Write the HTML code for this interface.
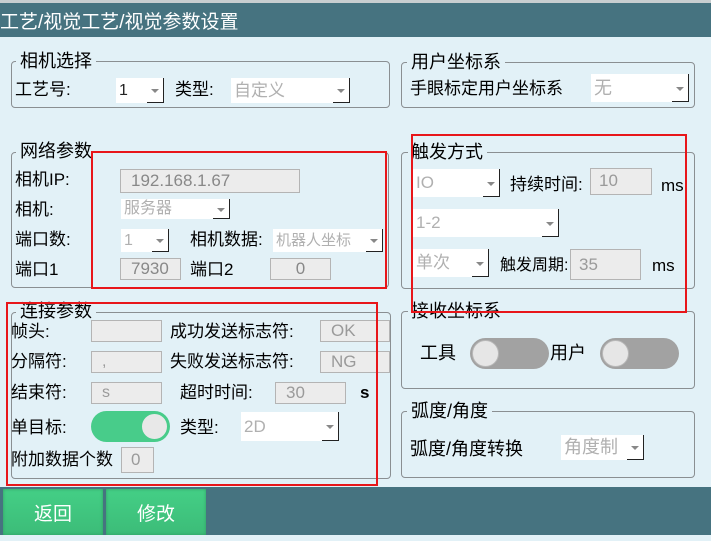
<!DOCTYPE html>
<html><head><meta charset="utf-8"><style>
*{margin:0;padding:0;box-sizing:border-box}
body{width:711px;height:535px;overflow:hidden;background:#e2f1f7;font-family:"Liberation Sans","Noto Sans CJK SC",sans-serif;color:#000;position:relative}
.a{position:absolute;white-space:nowrap}
.hdr{left:0;top:0;width:711px;height:37px;background:#467380;border-top:3px solid #c8ced0}
.ht{left:0;top:7px;color:#fff;font-size:19px}
.g{position:absolute;border:1px solid #8a8f92;border-radius:4px}
.gt{position:absolute;font-size:18px;background:#e2f1f7;padding:0 4px;line-height:20px}
.l{position:absolute;font-size:17px;line-height:20px;white-space:nowrap}
.in{position:absolute;background:#ececec;border:1px solid #b4b4b4;color:#9a9a9a;font-size:16px;line-height:20px;padding-left:10px;overflow:hidden}
.cb{position:absolute;background:#fff;color:#b0b0b0;font-size:16px;padding-left:3px;overflow:hidden}
.cb .ar{position:absolute;right:0;top:0;bottom:0;width:17px;border-right:1px solid #222;border-bottom:1px solid #222;background:#fff}
.cb .ar:after{content:"";position:absolute;left:4px;top:50%;margin-top:-1px;border-left:4px solid transparent;border-right:4px solid transparent;border-top:4px solid #888}
.red{position:absolute;border:2px solid #e8161a}
.tg{position:absolute;border-radius:16px;background:#a2a2a2}
.tg .k{position:absolute;top:2px;width:27px;height:27px;border-radius:50%;background:#e6e6e6;border:1px solid #b8b8b8}
.bar{left:0;top:487px;width:711px;height:48px;background:#467380}
.btn{position:absolute;top:489px;height:46px;background:linear-gradient(#44cf86,#3cbc78);color:#fff;font-size:19px;text-align:center;line-height:52px;box-shadow:inset 0 0 3px #2f9c62}
</style></head><body>
<div class="a hdr"></div>
<div class="a ht">工艺/视觉工艺/视觉参数设置</div>

<div class="g" style="left:11px;top:61px;width:379px;height:47px"></div>
<div class="gt" style="left:16px;top:51px">相机选择</div>
<div class="l" style="left:15px;top:80px">工艺号:</div>
<div class="cb" style="left:116px;top:78px;width:48px;height:25px;line-height:25px;color:#222">1<div class="ar"></div></div>
<div class="l" style="left:175px;top:80px">类型:</div>
<div class="cb" style="left:231px;top:78px;width:119px;height:25px;line-height:25px;font-size:17px">自定义<div class="ar"></div></div>

<div class="g" style="left:11px;top:152px;width:378px;height:136px"></div>
<div class="gt" style="left:16px;top:141px">网络参数</div>
<div class="l" style="left:15px;top:170px">相机IP:</div>
<div class="in" style="left:120px;top:169px;width:180px;height:24px;line-height:22px;font-size:17px;color:#888">192.168.1.67</div>
<div class="l" style="left:15px;top:200px">相机:</div>
<div class="cb" style="left:121px;top:199px;width:109px;height:20px;line-height:19px">服务器<div class="ar"></div></div>
<div class="l" style="left:15px;top:230px">端口数:</div>
<div class="cb" style="left:121px;top:229px;width:48px;height:23px;line-height:23px">1<div class="ar"></div></div>
<div class="l" style="left:190px;top:230px">相机数据:</div>
<div class="cb" style="left:273px;top:229px;width:110px;height:23px;line-height:23px;font-size:15px">机器人坐标<div class="ar"></div></div>
<div class="l" style="left:15px;top:260px">端口1</div>
<div class="in" style="left:120px;top:258px;width:61px;height:22px;font-size:17px;color:#888">7930</div>
<div class="l" style="left:190px;top:260px">端口2</div>
<div class="in" style="left:270px;top:258px;width:61px;height:22px;font-size:17px;color:#888;text-align:center;padding:0">0</div>

<div class="g" style="left:11px;top:312px;width:380px;height:167px"></div>
<div class="gt" style="left:16px;top:301px">连接参数</div>
<div class="l" style="left:11px;top:322px">帧头:</div>
<div class="in" style="left:91px;top:320px;width:71px;height:22px"></div>
<div class="l" style="left:170px;top:322px">成功发送标志符:</div>
<div class="in" style="left:320px;top:320px;width:70px;height:22px;font-size:17px">OK</div>
<div class="l" style="left:11px;top:352px">分隔符:</div>
<div class="in" style="left:91px;top:351px;width:71px;height:22px">,</div>
<div class="l" style="left:170px;top:352px">失败发送标志符:</div>
<div class="in" style="left:320px;top:351px;width:70px;height:22px;font-size:17px">NG</div>
<div class="l" style="left:11px;top:383px">结束符:</div>
<div class="in" style="left:91px;top:382px;width:71px;height:22px">s</div>
<div class="l" style="left:180px;top:383px">超时时间:</div>
<div class="in" style="left:275px;top:382px;width:71px;height:22px;font-size:17px">30</div>
<div class="l" style="left:360px;top:383px;font-weight:bold">s</div>
<div class="l" style="left:11px;top:418px">单目标:</div>
<div class="tg" style="left:91px;top:411px;width:79px;height:31px;background:#48cc8a"><div class="k" style="left:50px;background:#e8e8e8;border-color:#48cc8a"></div></div>
<div class="l" style="left:180px;top:418px">类型:</div>
<div class="cb" style="left:241px;top:412px;width:98px;height:29px;line-height:29px;font-size:17px">2D<div class="ar"></div></div>
<div class="l" style="left:11px;top:450px;width:110px;overflow:hidden">附加数据个数</div>
<div class="in" style="left:121px;top:447px;width:33px;height:26px;line-height:24px;padding-left:9px;font-size:17px">0</div>

<div class="g" style="left:401px;top:62px;width:294px;height:46px"></div>
<div class="gt" style="left:407px;top:52px">用户坐标系</div>
<div class="l" style="left:410px;top:79px">手眼标定用户坐标系</div>
<div class="cb" style="left:591px;top:74px;width:98px;height:28px;line-height:28px;font-size:18px">无<div class="ar"></div></div>

<div class="g" style="left:401px;top:152px;width:294px;height:137px"></div>
<div class="gt" style="left:408px;top:142px;padding:0 4px 0 3px">触发方式</div>
<div class="cb" style="left:413px;top:169px;width:87px;height:28px;line-height:28px;font-size:17px">IO<div class="ar"></div></div>
<div class="l" style="left:510px;top:175px;font-size:17px">持续时间:</div>
<div class="in" style="left:590px;top:168px;width:62px;height:27px;line-height:24px;font-size:17px;padding-left:8px">10</div>
<div class="l" style="left:661px;top:176px;font-size:17px">ms</div>
<div class="cb" style="left:413px;top:209px;width:146px;height:28px;line-height:28px;font-size:17px">1-2<div class="ar"></div></div>
<div class="cb" style="left:413px;top:249px;width:76px;height:28px;line-height:28px;font-size:17px">单次<div class="ar"></div></div>
<div class="l" style="left:500px;top:256px;font-size:16px">触发周期:</div>
<div class="in" style="left:570px;top:249px;width:71px;height:31px;line-height:30px;font-size:17px;padding-left:8px">35</div>
<div class="l" style="left:652px;top:256px;font-size:17px">ms</div>

<div class="g" style="left:401px;top:311px;width:294px;height:78px"></div>
<div class="gt" style="left:408px;top:301px;padding:0 4px 0 3px">接收坐标系</div>
<div class="l" style="left:420px;top:343px;font-size:18px">工具</div>
<div class="tg" style="left:470px;top:338px;width:79px;height:31px"><div class="k" style="left:2px"></div></div>
<div class="l" style="left:550px;top:343px;font-size:18px">用户</div>
<div class="tg" style="left:600px;top:338px;width:79px;height:31px"><div class="k" style="left:2px"></div></div>

<div class="g" style="left:401px;top:411px;width:294px;height:67px"></div>
<div class="gt" style="left:407px;top:401px">弧度/角度</div>
<div class="l" style="left:410px;top:439px;font-size:18px">弧度/角度转换</div>
<div class="cb" style="left:561px;top:435px;width:83px;height:25px;line-height:25px;font-size:18px">角度制<div class="ar"></div></div>

<div class="red" style="left:91px;top:151px;width:296px;height:138px"></div>
<div class="red" style="left:6px;top:302px;width:372px;height:184px"></div>
<div class="red" style="left:411px;top:134px;width:276px;height:179px"></div>

<div class="a bar"></div>
<div class="btn" style="left:3px;width:100px">返回</div>
<div class="btn" style="left:106px;width:100px">修改</div>
</body></html>
